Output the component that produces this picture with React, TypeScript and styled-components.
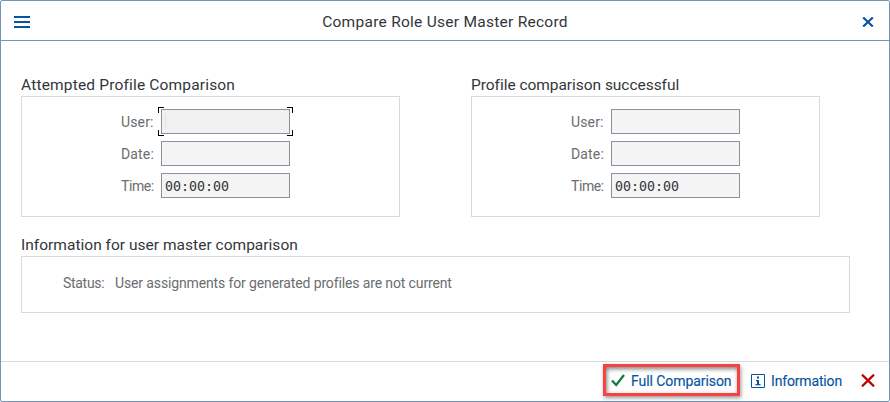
import React from 'react';
import styled, { createGlobalStyle } from 'styled-components';

const GlobalStyle = createGlobalStyle`
  * { box-sizing: border-box; }
  html, body { margin: 0; padding: 0; background: #fff; }
  svg { display: block; flex: none; }
  button, input { font: inherit; letter-spacing: inherit; }
`;

const Dialog = styled.main`
  display: flex;
  flex-direction: column;
  width: 890px;
  height: 402px;
  border: 1px solid #7596b8;
  border-radius: 2px;
  background: #fff;
  font-family: Roboto, sans-serif;
  color: #32363a;
  overflow: hidden;
`;

const Header = styled.header`
  display: grid;
  grid-template-columns: 60px 1fr 60px;
  align-items: center;
  height: 40px;
  flex: none;
  border-bottom: 1px solid #7596b8;
`;

const Title = styled.h1<{ $spacing: number }>`
  margin: 0;
  padding-top: 2px;
  font-size: 15.5px;
  line-height: 20px;
  font-weight: 400;
  text-align: center;
  white-space: nowrap;
  letter-spacing: ${(p) => p.$spacing}px;
`;

const IconButton = styled.button<{ $end?: boolean }>`
  display: flex;
  justify-content: ${(p) => (p.$end ? 'flex-end' : 'flex-start')};
  padding: ${(p) => (p.$end ? '2px 15px 0 0' : '2px 0 0 13px')};
  border: 0;
  background: none;
`;

const Content = styled.div`
  display: flex;
  flex-direction: column;
  flex: 1;
  padding: 33px 20px 0;
`;

const Columns = styled.div`
  display: flex;
  gap: 71px;
  margin-bottom: 17px;
`;

const Group = styled.section<{ $width: number }>`
  width: ${(p) => p.$width}px;
`;

const GroupTitle = styled.h2<{ $spacing: number }>`
  margin: 0;
  height: 22px;
  font-size: 15.5px;
  line-height: 22px;
  font-weight: 400;
  white-space: nowrap;
  letter-spacing: ${(p) => p.$spacing}px;
`;

const FieldBox = styled.div`
  display: flex;
  flex-direction: column;
  gap: 7px;
  height: 121px;
  padding: 12px 0 0 99px;
  border: 1px solid #d9d9d9;
`;

const Field = styled.label`
  display: flex;
  align-items: center;
  height: 25px;
  font-size: 14px;
  color: #6a6d70;
`;

const FieldLabel = styled.span<{ $spacing: number }>`
  width: 40px;
  padding-top: 1px;
  line-height: 18px;
  white-space: nowrap;
  letter-spacing: ${(p) => p.$spacing}px;
`;

const InputFrame = styled.span`
  position: relative;
  display: flex;
  width: 129px;
  height: 25px;
`;

const Input = styled.input<{ $focused?: boolean }>`
  width: 129px;
  height: 25px;
  padding: 2px 3px 0;
  border: 1px solid #89919a;
  border-radius: 0;
  outline: 0;
  background: ${(p) => (p.$focused ? '#f1f1f1' : '#f4f4f4')};
  font-family: 'DejaVu Sans Mono', monospace;
  font-size: 13.3px;
  color: #32363a;
`;

const FocusCorners = styled.svg`
  position: absolute;
  left: -3px;
  top: -2px;
  pointer-events: none;
`;

const StatusBox = styled.div`
  display: flex;
  height: 57px;
  padding: 17px 0 0 41px;
  border: 1px solid #d9d9d9;
  font-size: 14px;
  line-height: 18px;
  color: #6a6d70;
`;

const StatusLabel = styled.span`
  width: 52px;
  letter-spacing: -0.3px;
`;

const StatusText = styled.span`
  letter-spacing: -0.13px;
  white-space: nowrap;
`;

const Footer = styled.footer`
  display: flex;
  align-items: flex-start;
  justify-content: flex-end;
  height: 40px;
  flex: none;
  padding: 2px 14px 0 0;
  border-top: 1px solid #d9d9d9;
`;

const Action = styled.button<{ $width: number; $marked?: boolean }>`
  display: flex;
  flex: none;
  align-items: center;
  gap: 6px;
  width: ${(p) => p.$width}px;
  height: 32px;
  padding: ${(p) => (p.$marked ? '0 0 0 5px' : '0 0 0 11px')};
  border: ${(p) => (p.$marked ? '3px solid #fa4141' : '0')};
  box-shadow: ${(p) =>
    p.$marked ? '1px 2px 4px rgba(0,0,0,.4), inset 1px 2px 4px rgba(0,0,0,.5)' : 'none'};
  background: transparent;
  color: #0854a0;
  font-size: 14px;
  line-height: 18px;
  white-space: nowrap;
`;

const ActionText = styled.span<{ $spacing: number }>`
  padding-top: 1px;
  letter-spacing: ${(p) => p.$spacing}px;
  -webkit-text-stroke: 0.15px currentColor;
`;

const InfoIcon = styled.svg`
  margin-top: 2px;
`;

const Corners = () => (
  <FocusCorners width="135" height="29" viewBox="0 0 135 29" fill="none" stroke="#000" shapeRendering="crispEdges">
    <path d="M.5 6V.5H6M129 .5h5.5V6M.5 23v5.5H6M129 28.5h5.5V23" />
    <path d="M7.5 7v15" stroke="#e2e2e2" />
  </FocusCorners>
);

const fields = [
  { label: 'User:', value: '', spacing: 0.15 },
  { label: 'Date:', value: '', spacing: 0.15 },
  { label: 'Time:', value: '00:00:00', spacing: -0.4 },
];

function ComparisonGroup({ title, width, spacing, focused }: {
  title: string; width: number; spacing: number; focused?: boolean;
}) {
  return (
    <Group $width={width}>
      <GroupTitle $spacing={spacing}>{title}</GroupTitle>
      <FieldBox>
        {fields.map((field, i) => (
          <Field key={field.label}>
            <FieldLabel $spacing={field.spacing}>{field.label}</FieldLabel>
            <InputFrame>
              <Input readOnly value={field.value} $focused={focused && i === 0} />
              {focused && i === 0 && <Corners />}
            </InputFrame>
          </Field>
        ))}
      </FieldBox>
    </Group>
  );
}

export default function App() {
  return (
    <>
      <GlobalStyle />
      <Dialog>
        <Header>
          <IconButton aria-label="Menu">
            <svg width="16" height="12" viewBox="0 0 16 12" fill="#0854a0">
              <path d="M0 0h16v2H0zM0 5h16v2H0zM0 10h16v2H0z" />
            </svg>
          </IconButton>
          <Title $spacing={0.27}>Compare Role User Master Record</Title>
          <IconButton aria-label="Close" $end>
            <svg width="12" height="10" viewBox="0 0 12 10" fill="none" stroke="#0854a0" strokeWidth="2.1">
              <path d="M1.2.4 10.8 9.6M10.8.4 1.2 9.6" />
            </svg>
          </IconButton>
        </Header>
        <Content>
          <Columns>
            <ComparisonGroup title="Attempted Profile Comparison" width={379} spacing={0.17} focused />
            <ComparisonGroup title="Profile comparison successful" width={349} spacing={-0.04} />
          </Columns>
          <Group $width={829}>
            <GroupTitle $spacing={0.02}>Information for user master comparison</GroupTitle>
            <StatusBox>
              <StatusLabel>Status:</StatusLabel>
              <StatusText>User assignments for generated profiles are not current</StatusText>
            </StatusBox>
          </Group>
        </Content>
        <Footer>
          <Action $width={137} $marked>
            <svg width="14" height="13" viewBox="0 0 14 13" fill="none" stroke="#107e3e" strokeWidth="2.3">
              <path d="M1 6.5 5.2 11 13 1" />
            </svg>
            <ActionText $spacing={-0.07}>Full Comparison</ActionText>
          </Action>
          <Action $width={110}>
            <InfoIcon width="14" height="14" viewBox="0 0 14 14" fill="none" stroke="#0854a0">
              <path d="M.5.5h13v13H.5z" />
              <path d="M6 2.5h2v2H6zM5 6h3v4h1.5v1.3h-5V10H6V7.2H5z" fill="#0854a0" stroke="none" />
            </InfoIcon>
            <ActionText $spacing={-0.16}>Information</ActionText>
          </Action>
          <Action $width={25} aria-label="Cancel">
            <svg width="14" height="13" viewBox="0 0 14 13" fill="none" stroke="#b00" strokeWidth="2.2">
              <path d="M1 .6 13 12.4M13 .6 1 12.4" />
            </svg>
          </Action>
        </Footer>
      </Dialog>
    </>
  );
}
